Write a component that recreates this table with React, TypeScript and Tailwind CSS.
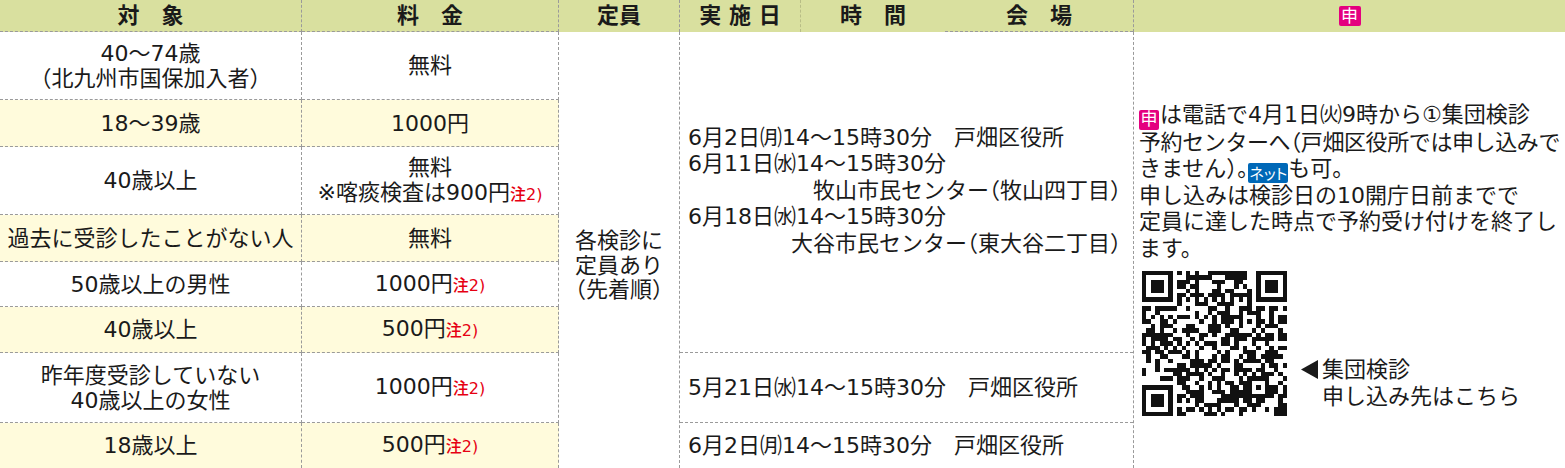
import React from 'react';

function mulberry32(seed: number) {
  let a = seed;
  return function () {
    a |= 0;
    a = (a + 0x6d2b79f5) | 0;
    let t = Math.imul(a ^ (a >>> 15), 1 | a);
    t = (t + Math.imul(t ^ (t >>> 7), 61 | t)) ^ t;
    return ((t ^ (t >>> 14)) >>> 0) / 4294967296;
  };
}

const N = 33;
function buildQR(): boolean[][] {
  const rnd = mulberry32(20250401);
  const m: boolean[][] = [];
  for (let y = 0; y < N; y++) {
    const row: boolean[] = [];
    for (let x = 0; x < N; x++) row.push(rnd() < 0.5);
    m.push(row);
  }
  const finder = (ox: number, oy: number) => {
    for (let y = -1; y <= 7; y++)
      for (let x = -1; x <= 7; x++) {
        const X = ox + x;
        const Y = oy + y;
        if (X < 0 || Y < 0 || X >= N || Y >= N) continue;
        const inF = x >= 0 && x <= 6 && y >= 0 && y <= 6;
        let v = false;
        if (inF) v = x === 0 || x === 6 || y === 0 || y === 6 || (x >= 2 && x <= 4 && y >= 2 && y <= 4);
        m[Y][X] = v;
      }
  };
  finder(0, 0);
  finder(N - 7, 0);
  finder(0, N - 7);
  for (let i = 8; i < N - 8; i++) {
    m[6][i] = i % 2 === 0;
    m[i][6] = i % 2 === 0;
  }
  for (let y = -2; y <= 2; y++)
    for (let x = -2; x <= 2; x++) m[26 + y][26 + x] = Math.max(Math.abs(x), Math.abs(y)) !== 1;
  m[N - 8][8] = true;
  return m;
}

const QR_MATRIX = buildQR();
const QR_PATH = (() => {
  let d = '';
  for (let y = 0; y < N; y++)
    for (let x = 0; x < N; x++) if (QR_MATRIX[y][x]) d += `M${x} ${y}h1v1h-1z`;
  return d;
})();

function QR() {
  return (
    <svg width={145} height={145} viewBox={`0 0 ${N} ${N}`} shapeRendering="crispEdges" className="block shrink-0">
      <rect width={N} height={N} fill="#fff" />
      <path d={QR_PATH} fill="#111" />
    </svg>
  );
}

function Note() {
  return <span className="text-[16px] text-[#e60012] font-medium">注2)</span>;
}

function Shin({ big }: { big?: boolean }) {
  return big ? (
    <span className="inline-flex items-center justify-center w-[22px] h-[20px] bg-[#e4007f] text-white text-[17px] leading-none rounded-[2px]">
      申
    </span>
  ) : (
    <span className="inline-flex items-center justify-center w-[20px] h-[20px] bg-[#e4007f] text-white text-[17px] leading-none rounded-[2px] align-[-3px] mr-[1px]">
      申
    </span>
  );
}

function Net() {
  return (
    <span className="inline-flex items-center justify-center w-[40px] h-[20px] bg-[#0068b7] text-white text-[15px] leading-none rounded-[2px] align-[-3px] [font-family:'Noto_Sans_CJK_JP',sans-serif] [font-feature-settings:'palt']">
      ネット
    </span>
  );
}

type Row = { a: React.ReactNode; b: React.ReactNode; y: boolean; rs: string };

const rows: Row[] = [
  { a: <>40～74歳<br />（北九州市国保加入者）</>, b: '無料', y: false, rs: 'row-start-2' },
  { a: '18～39歳', b: '1000円', y: true, rs: 'row-start-3' },
  { a: '40歳以上', b: <>無料<br />※喀痰検査は900円<Note /></>, y: false, rs: 'row-start-4' },
  { a: '過去に受診したことがない人', b: '無料', y: true, rs: 'row-start-5' },
  { a: '50歳以上の男性', b: <>1000円<Note /></>, y: false, rs: 'row-start-6' },
  { a: '40歳以上', b: <>500円<Note /></>, y: true, rs: 'row-start-7' },
  { a: <>昨年度受診していない<br />40歳以上の女性</>, b: <>1000円<Note /></>, y: false, rs: 'row-start-8' },
  { a: '18歳以上', b: <>500円<Note /></>, y: true, rs: 'row-start-9' },
];

export default function App() {
  return (
    <div className="w-[1565px] h-[468px] overflow-hidden bg-white text-[#1a1a1a] text-[22px] [font-family:'DejaVu_Sans','Noto_Sans_CJK_JP',sans-serif] [font-feature-settings:'halt'] grid grid-cols-[302px_257px_121px_453px_432px] grid-rows-[32px_68px_47px_68px_47px_45px_46px_70px_45px]">
      {/* header */}
      <div className="col-start-1 row-start-1 bg-[#d9e09f] border-r border-b border-dashed border-[#9a9a9a] flex items-center justify-center font-bold leading-none">
        対　象
      </div>
      <div className="col-start-2 row-start-1 bg-[#d9e09f] border-r border-b border-dashed border-[#9a9a9a] flex items-center justify-center font-bold leading-none">
        料　金
      </div>
      <div className="col-start-3 row-start-1 bg-[#d9e09f] border-r border-dashed border-[#9a9a9a] flex items-center justify-center font-bold leading-none">
        定員
      </div>
      <div className="col-start-4 row-start-1 bg-[#d9e09f] flex font-bold leading-none">
        <div className="w-[121px] border-r border-dashed border-[#b8bd86] flex items-center justify-center">
          実 施 日
        </div>
        <div className="w-[144px] flex items-center justify-center">時　間</div>
        <div className="flex-1 border-b border-dashed border-[#9a9a9a] flex items-center justify-center">会　場</div>
      </div>
      <div className="col-start-5 row-start-1 bg-[#d9e09f] border-l border-dashed border-[#9a9a9a] flex items-center justify-center">
        <Shin big />
      </div>

      {/* left rows */}
      {rows.map((r, i) => (
        <React.Fragment key={i}>
          <div
            className={`col-start-1 ${r.rs} ${r.y ? 'bg-[#fffbdc]' : 'bg-white'} ${i < 7 ? 'border-b' : ''} border-r border-dashed border-[#9a9a9a] flex items-center justify-center text-center leading-[25px] whitespace-nowrap`}
          >
            <div>{r.a}</div>
          </div>
          <div
            className={`col-start-2 ${r.rs} ${r.y ? 'bg-[#fffbdc]' : 'bg-white'} ${i < 7 ? 'border-b' : ''} border-r border-dashed border-[#9a9a9a] flex items-center justify-center text-center leading-[25px] whitespace-nowrap`}
          >
            <div>{r.b}</div>
          </div>
        </React.Fragment>
      ))}

      {/* 定員 */}
      <div className="col-start-3 row-start-2 row-span-8 border-r border-dashed border-[#9a9a9a] flex items-center justify-center pt-[32px] text-center leading-[24.5px]">
        <div>
          各検診に<br />定員あり<br />（先着順）
        </div>
      </div>

      {/* 実施日・時間・会場 */}
      <div className="col-start-4 row-start-2 row-span-6 border-b border-dashed border-[#9a9a9a] flex flex-col justify-center pl-[8px] pr-[12px] pb-[2px] leading-[26.5px] whitespace-nowrap">
        <div>6月2日㈪14～15時30分　戸畑区役所</div>
        <div>6月11日㈬14～15時30分</div>
        <div className="text-right">牧山市民センター（牧山四丁目）</div>
        <div>6月18日㈬14～15時30分</div>
        <div className="text-right">大谷市民センター（東大谷二丁目）</div>
      </div>
      <div className="col-start-4 row-start-8 border-b border-dashed border-[#9a9a9a] flex items-center pl-[8px] whitespace-nowrap">
        5月21日㈬14～15時30分　戸畑区役所
      </div>
      <div className="col-start-4 row-start-9 flex items-center pl-[8px] whitespace-nowrap">
        6月2日㈪14～15時30分　戸畑区役所
      </div>

      {/* 申 column */}
      <div className="col-start-5 row-start-2 row-span-8 border-l border-dashed border-[#9a9a9a] pl-[5px] pt-[70px] leading-[26.5px] whitespace-nowrap overflow-hidden">
        <div>
          <Shin />は電話で4月1日㈫9時から①集団検診
          <br />
          <span className="tracking-[-0.4px]">予約センターへ（戸畑区役所では申し込みで</span>
          <br />
          きません）。<Net />も可。
          <br />
          申し込みは検診日の10開庁日前までで
          <br />
          定員に達した時点で予約受け付けを終了し
          <br />
          ます。
        </div>
        <div className="mt-[9px] pl-[3px] flex items-end gap-[14px]">
          <QR />
          <div className="pb-[6px] leading-[27px]">
            <div className="flex items-center">
              <svg width={17} height={19} viewBox="0 0 17 19" className="mr-[4px] shrink-0">
                <path d="M0 9.5 L17 0 L17 19 Z" fill="#1a1a1a" />
              </svg>
              集団検診
            </div>
            <div className="pl-[21px]">申し込み先はこちら</div>
          </div>
        </div>
      </div>
    </div>
  );
}
